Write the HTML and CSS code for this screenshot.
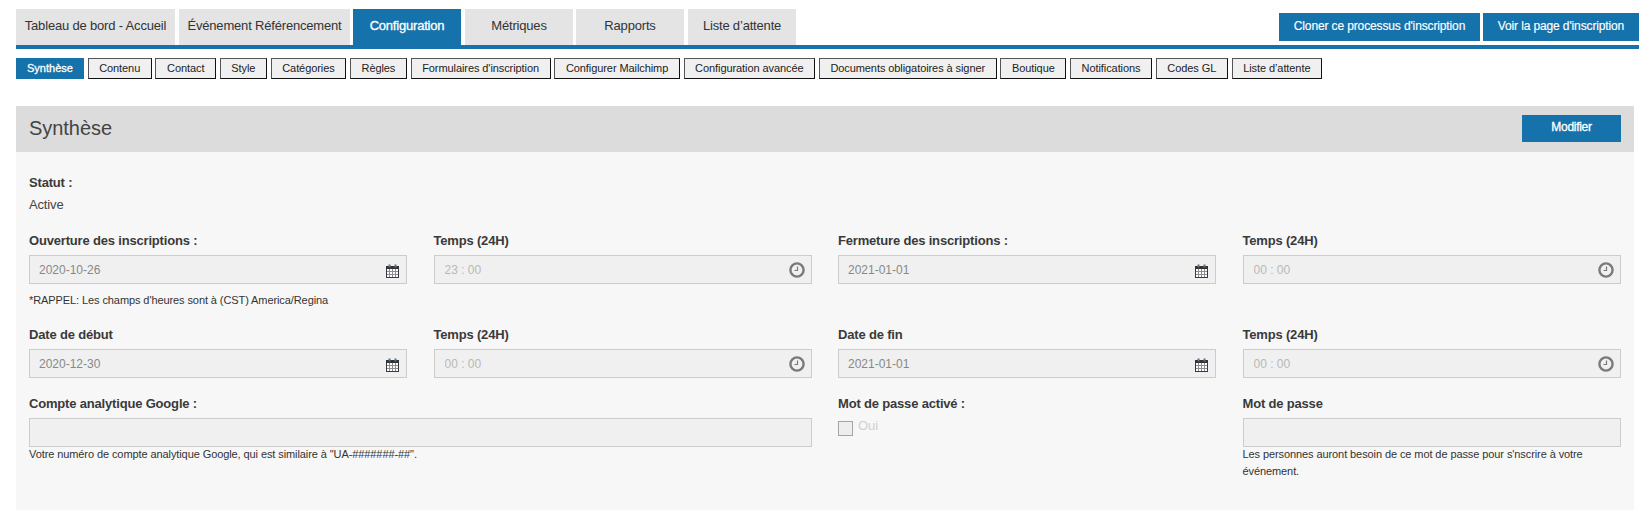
FILE: index.html
```html
<!DOCTYPE html>
<html lang="fr">
<head>
<meta charset="utf-8">
<title>Synthèse</title>
<link rel="stylesheet" href="styles.css">
</head>
<body>
<svg class="defs" width="0" height="0" aria-hidden="true">
  <symbol id="cal" viewBox="0 0 13 14">
    <rect x="0.5" y="2.5" width="12" height="11" fill="#fff" stroke="#3a3a3a"/>
    <rect x="0" y="2" width="13" height="3" fill="#333"/>
    <rect x="2.5" y="0.5" width="2" height="3" fill="#5b6f86"/>
    <rect x="8.5" y="0.5" width="2" height="3" fill="#5b6f86"/>
    <path d="M3.5 5v8M6.5 5v8M9.5 5v8M1 7.5h11M1 10.5h11" stroke="#8c8c96" stroke-width="1" fill="none"/>
  </symbol>
  <symbol id="clk" viewBox="0 0 16 16">
    <circle cx="8" cy="8" r="6.6" fill="none" stroke="#7a7a7a" stroke-width="2.4"/>
    <path d="M8.5 4.5v4H5.5" fill="none" stroke="#7a7a7a" stroke-width="1.2"/>
  </symbol>
</svg>
<div class="page">
  <header class="top">
    <nav class="tabs">
      <a class="tab t1">Tableau de bord - Accueil</a>
      <a class="tab t2">Événement Référencement</a>
      <a class="tab t3 active">Configuration</a>
      <a class="tab t4">Métriques</a>
      <a class="tab t5">Rapports</a>
      <a class="tab t6">Liste d’attente</a>
    </nav>
    <div class="actions">
      <a class="action a1">Cloner ce processus d'inscription</a>
      <a class="action a2">Voir la page d'inscription</a>
    </div>
  </header>
  <nav class="subtabs">
    <a class="sub on">Synthèse</a>
    <a class="sub">Contenu</a>
    <a class="sub">Contact</a>
    <a class="sub">Style</a>
    <a class="sub">Catégories</a>
    <a class="sub">Règles</a>
    <a class="sub">Formulaires d'inscription</a>
    <a class="sub">Configurer Mailchimp</a>
    <a class="sub">Configuration avancée</a>
    <a class="sub">Documents obligatoires à signer</a>
    <a class="sub">Boutique</a>
    <a class="sub">Notifications</a>
    <a class="sub">Codes GL</a>
    <a class="sub">Liste d’attente</a>
  </nav>
  <section class="panel">
    <div class="panel-head">
      <h1>Synthèse</h1>
      <a class="edit">Modifier</a>
    </div>
    <div class="panel-body">
      <div class="status">
        <div class="status-label">Statut :</div>
        <div class="status-value">Active</div>
      </div>
      <div class="row row-1">
        <div class="field">
          <label>Ouverture des inscriptions :</label>
          <div class="box"><input class="date" disabled value="2020-10-26"><svg class="ico-cal"><use href="#cal"/></svg></div>
          <p class="note note-gap">*RAPPEL: Les champs d'heures sont à (CST) America/Regina</p>
        </div>
        <div class="field">
          <label>Temps (24H)</label>
          <div class="box"><input class="time" disabled value="23 : 00"><svg class="ico-clk"><use href="#clk"/></svg></div>
        </div>
        <div class="field">
          <label>Fermeture des inscriptions :</label>
          <div class="box"><input class="date" disabled value="2021-01-01"><svg class="ico-cal"><use href="#cal"/></svg></div>
        </div>
        <div class="field">
          <label>Temps (24H)</label>
          <div class="box"><input class="time" disabled value="00 : 00"><svg class="ico-clk"><use href="#clk"/></svg></div>
        </div>
      </div>
      <div class="row row-2">
        <div class="field">
          <label>Date de début</label>
          <div class="box"><input class="date" disabled value="2020-12-30"><svg class="ico-cal"><use href="#cal"/></svg></div>
        </div>
        <div class="field">
          <label>Temps (24H)</label>
          <div class="box"><input class="time" disabled value="00 : 00"><svg class="ico-clk"><use href="#clk"/></svg></div>
        </div>
        <div class="field">
          <label>Date de fin</label>
          <div class="box"><input class="date" disabled value="2021-01-01"><svg class="ico-cal"><use href="#cal"/></svg></div>
        </div>
        <div class="field">
          <label>Temps (24H)</label>
          <div class="box"><input class="time" disabled value="00 : 00"><svg class="ico-clk"><use href="#clk"/></svg></div>
        </div>
      </div>
      <div class="row row-3">
        <div class="field span-2">
          <label>Compte analytique Google :</label>
          <div class="box"><input disabled></div>
          <p class="note note-tight">Votre numéro de compte analytique Google, qui est similaire à "UA-#######-##".</p>
        </div>
        <div class="field">
          <label>Mot de passe activé :</label>
          <div class="check"><span class="checkbox"></span><span class="check-text">Oui</span></div>
        </div>
        <div class="field">
          <label>Mot de passe</label>
          <div class="box"><input disabled></div>
          <p class="note note-tight">Les personnes auront besoin de ce mot de passe pour s'nscrire à votre événement.</p>
        </div>
      </div>
    </div>
  </section>
</div>
</body>
</html>
```
FILE: styles.css
```css
* { box-sizing: border-box; }
html, body { margin: 0; padding: 0; background: #fff; }
body { font-family: "Liberation Sans", Arial, sans-serif; color: #333; }
.defs { position: absolute; }
.page { padding: 9px 13px 21px 16px; height: 531px; overflow: hidden; }
.top { display: flex; justify-content: space-between; align-items: flex-start; border-bottom: 4px solid #1672ab; height: 40px; }
.tabs { display: flex; }
.tab { display: block; height: 36px; line-height: 33px; font-size: 13px; letter-spacing: -0.18px; background: #e4e4e4; color: #333; text-align: center; margin-right: 4px; white-space: nowrap; }
.t1 { width: 159px; }
.t2 { width: 171px; margin-right: 3px; }
.t3 { width: 108px; }
.t4 { width: 108px; margin-right: 3px; }
.t5 { width: 108px; margin-right: 4px; }
.t6 { width: 108px; }
.tab.active { background: #1672ab; color: #fff; -webkit-text-stroke: 0.3px #fff; letter-spacing: -0.2px; }
.actions { display: flex; gap: 3px; margin-top: 4px; }
.action { display: block; height: 28px; line-height: 27px; background: #1672ab; color: #fff; font-size: 12px; letter-spacing: -0.13px; text-align: center; -webkit-text-stroke: 0.15px #fff; white-space: nowrap; }
.a1 { width: 201px; }
.a2 { width: 156px; }
.subtabs { display: flex; gap: 3.7px; margin-top: 9px; }
.sub { display: block; height: 21px; line-height: 19px; font-size: 11px; letter-spacing: -0.08px; padding: 0 10.6px; background: #f0f0f0; color: #222; border: 1px solid #111; border-top-color: #555; border-left-color: #555; white-space: nowrap; }
.sub.on { background: #1672ab; color: #fff; -webkit-text-stroke: 0.3px #fff; border-color: #1672ab; letter-spacing: 0; padding: 0 10px; }
.panel { margin-top: 27px; width: 1618px; background: #f7f7f7; height: 404px; }
.panel-head { height: 46px; background: #dcdcdc; display: flex; justify-content: space-between; align-items: flex-start; padding: 9px 13px; }
h1 { margin: 0; font-size: 20px; font-weight: normal; line-height: 26px; color: #444; letter-spacing: -0.05px; }
.edit { display: block; width: 99px; height: 27px; line-height: 25px; background: #1672ab; color: #fff; font-size: 12px; letter-spacing: -0.3px; -webkit-text-stroke: 0.3px #fff; text-align: center; }
.panel-body { padding: 23px 13px 0; }
.status-label { font-size: 13px; font-weight: bold; line-height: 16px; letter-spacing: -0.18px; color: #3a3a3a; }
.status-value { font-size: 13px; line-height: 16px; margin-top: 6px; letter-spacing: -0.15px; color: #444; }
.row { display: grid; grid-template-columns: repeat(4, 378px); column-gap: 26.5px; }
.row-1 { margin-top: 20px; }
.row-3 { margin-top: 18px; }
.row-1 .field { min-height: 94px; }
.span-2 { grid-column: span 2; }
label { display: block; font-size: 13px; font-weight: bold; line-height: 16px; letter-spacing: -0.18px; margin-bottom: 6px; color: #3a3a3a; }
.box { position: relative; height: 29px; }
.box input { display: block; width: 100%; height: 29px; padding: 0 10px; border: 1px solid #ccc; background: #f0f0f0; font-family: inherit; font-size: 12px; color: #888; opacity: 1; }
.box input.date { padding: 1px 9px 0; }
.box input.time { color: #b8b8b8; }
.ico-cal { position: absolute; right: 8px; top: 9px; width: 13px; height: 14px; }
.ico-clk { position: absolute; right: 7px; top: 7px; width: 16px; height: 16px; }
.note { margin: 0; font-size: 11px; line-height: 16.5px; letter-spacing: -0.09px; color: #333; }
.note-gap { margin-top: 8px; }
.note-tight { margin-top: -1px; }
.check { display: flex; align-items: flex-start; }
.checkbox { display: block; width: 15px; height: 15px; margin-top: 3px; border: 1.5px solid #a5a5a5; background: #eee; }
.check-text { font-size: 13px; line-height: 15px; color: #d0d0d0; margin-left: 5px; }
```
